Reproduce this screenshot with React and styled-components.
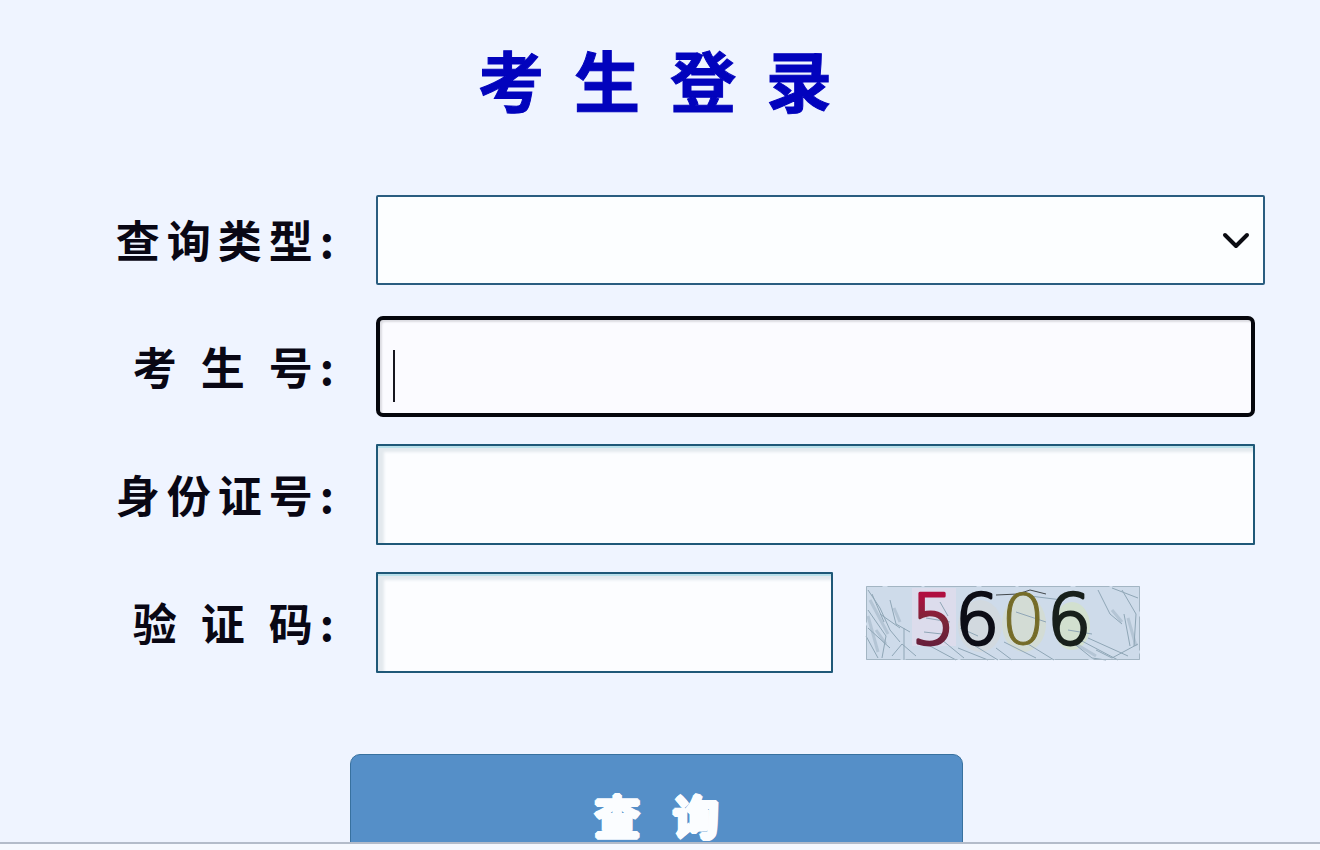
import React from "react";
import styled, { createGlobalStyle } from "styled-components";

const App = () => {
  return (
    <>
      <GlobalStyle />
      <Wrapper>
        <h1>考{"  "}生{"  "}登{"  "}录</h1>
        <form onSubmit={(e) => e.preventDefault()}>
          <SelectRow>
            <Label htmlFor="type">查询类型:</Label>
            <SelectBox>
              <select id="type" defaultValue="">
                <option value=""></option>
              </select>
              <Arrow viewBox="0 0 28 18" aria-hidden="true">
                <path d="M3 3 L14 14 L25 3" />
              </Arrow>
            </SelectBox>
          </SelectRow>

          <Row>
            <Label htmlFor="number">考 生 号:</Label>
            <InputBox>
              <Input id="number" type="text" $active />
              <Caret />
            </InputBox>
          </Row>

          <Row>
            <Label htmlFor="card">身份证号:</Label>
            <InputBox>
              <Input id="card" type="text" />
            </InputBox>
          </Row>

          <Row>
            <Label htmlFor="code">验 证 码:</Label>
            <CodeBox>
              <Input id="code" type="text" />
              <Captcha />
            </CodeBox>
          </Row>

          <Submit type="submit">查 询</Submit>
        </form>
      </Wrapper>
    </>
  );
};

const Captcha = () => (
  <CaptchaSvg viewBox="0 0 274 74" role="img" aria-label="5606">
    <defs>
      <linearGradient id="five" x1="0" y1="0" x2="0" y2="1">
        <stop offset="0.2" stopColor="#b00f40" />
        <stop offset="0.5" stopColor="#7c2638" />
        <stop offset="1" stopColor="#5a1a3c" />
      </linearGradient>
    </defs>
    <rect width="274" height="74" fill="#cedbea" />
    <rect x="46" y="2" width="44" height="58" fill="#dcdcec" />
    <ellipse cx="114" cy="40" rx="22" ry="26" fill="#d2d9df" />
    <ellipse cx="158" cy="38" rx="22" ry="28" fill="#d3dcd5" />
    <ellipse cx="206" cy="40" rx="18" ry="24" fill="#d2e0cf" />
    <g fill="none" stroke="#a3b6c6" strokeWidth="3" opacity="0.6">
      <path d="M4 14 L22 48 M10 44 L20 58 M28 22 L34 36 M2 30 L12 66 M246 24 L256 36 M262 32 L270 60 M210 58 L230 70" />
    </g>
    <g fill="none" stroke="#8fa6b6" strokeWidth="1">
      <path d="M2 4 L14 22 L24 44 L34 56 M24 14 L30 38 L44 46 M2 24 L20 50 L16 72 M0 50 L12 72 M38 42 V74" />
      <path d="M6 8 L18 36 M14 28 L34 42 M2 42 L24 62 M26 70 L36 58 L50 70" />
      <path d="M64 60 L90 74 M76 54 L98 72 M92 62 L122 74 M106 58 L132 74 M130 62 L146 74 M138 56 L170 72 M162 58 L188 74" />
      <path d="M206 56 L226 72 L240 74 M214 54 L252 74 M222 52 L262 70 M230 64 L246 72 L272 58" />
      <path d="M232 4 L244 28 L256 38 M246 2 L272 12 M256 4 L270 28 L268 60 M258 28 L264 60" />
      <path d="M60 32 L84 36 M74 16 L82 30 M164 10 L196 14 M150 26 L180 36 M94 42 L112 50 M58 46 L76 48 M202 44 L226 48" />
    </g>
    <path d="M0.500 73.500 V0.500 H273.500 V73.500 Z" fill="none" stroke="#a3b5c3" strokeDasharray="34 3 52 5" />
    <path d="M130 9 L152 8 L164 4 L180 8" fill="none" stroke="#43484c" />
    <g
      fontFamily="'DejaVu Sans', sans-serif"
      fontSize="70"
      fontWeight="200"
      strokeLinejoin="round"
    >
      <text x="45" y="58" fill="url(#five)" stroke="url(#five)" strokeWidth="3">5</text>
      <text x="89" y="58" fill="#0d0d16" stroke="#0d0d16" strokeWidth="3">6</text>
      <text x="135" y="58" fill="#756c28" stroke="#756c28" strokeWidth="1">0</text>
      <text x="181" y="58" fill="#18201b" stroke="#18201b" strokeWidth="3">6</text>
    </g>
  </CaptchaSvg>
);

const GlobalStyle = createGlobalStyle`
  * {
    box-sizing: border-box;
    margin: 0;
    padding: 0;
  }

  body {
    background-color: #f6f9ff;
    font-family: "Noto Sans CJK SC", sans-serif;
  }
`;

const Wrapper = styled.main`
  height: calc(100vh - 6px);
  overflow: hidden;
  background-color: #eff4ff;
  border-bottom: 2px solid #b4bcca;

  h1 {
    padding: 28px 10px 0 0;
    height: 195px;
    text-align: center;
    white-space: pre;
    color: #0203bd;
    font-size: 66px;
    line-height: 100px;
    font-weight: 700;
    -webkit-text-stroke: 1px #0203bd;
  }
`;

const Row = styled.div`
  display: flex;
  align-items: center;
  padding-right: 55px;
  margin-bottom: 27px;
`;

const SelectRow = styled(Row)`
  margin-bottom: 31px;
`;

const Label = styled.label`
  flex: 0 0 376px;
  padding: 0 35px 2px 0;
  text-align: right;
  color: #090714;
  font-size: 44px;
  line-height: 64px;
  letter-spacing: 7px;
  font-weight: 700;
`;

const SelectBox = styled.div`
  position: relative;
  flex: 1;

  select {
    display: block;
    width: 100%;
    height: 90px;
    appearance: none;
    background-color: #fcfeff;
    border: 2px solid #2a5d80;
    border-radius: 2px;
    font-size: 44px;
    outline: none;
  }
`;

const Arrow = styled.svg`
  position: absolute;
  right: 15px;
  top: 37px;
  width: 28px;
  height: 18px;
  pointer-events: none;
  fill: none;
  stroke: #0b0c12;
  stroke-width: 4;
  stroke-linecap: round;
  stroke-linejoin: round;
`;

const InputBox = styled.div`
  position: relative;
  flex: 1;
  margin-right: 10px;
`;

const Input = styled.input`
  display: block;
  width: 100%;
  height: 101px;
  padding: 0 16px;
  font-size: 44px;
  outline: none;
  background-color: ${({ $active }) => ($active ? "#fbfbff" : "#fcfdff")};
  border: ${({ $active }) => ($active ? "4px solid #05060c" : "2px solid #1f5878")};
  border-radius: ${({ $active }) => ($active ? "7px" : "1px")};
  box-shadow: ${({ $active }) =>
    $active ? "inset 2px 2px 2px #dcdce2" : "inset 0 2px 0 #b9e0ea, inset 6px 6px 3px #e3e9ee"};
`;

const Caret = styled.span`
  position: absolute;
  left: 17px;
  top: 34px;
  width: 2px;
  height: 52px;
  background-color: #16161f;
`;

const CodeBox = styled.div`
  flex: 1;
  display: flex;
  align-items: center;
  gap: 33px;

  input {
    flex: 0 1 457px;
    min-width: 0;
  }
`;

const CaptchaSvg = styled.svg`
  flex: 0 0 274px;
  height: 74px;
  overflow: visible;
`;

const Submit = styled.button`
  display: block;
  width: calc(100% - 707px);
  height: 120px;
  padding-left: 11px;
  margin: 81px 0 0 350px;
  background-color: #558fc8;
  border: 1px solid #38719f;
  border-radius: 10px;
  color: #fbfdff;
  font-family: inherit;
  font-size: 46px;
  font-weight: 700;
  letter-spacing: 11px;
  text-shadow: 1px 1px 0 #fbfdff, -1px 1px 0 #fbfdff, 1px -1px 0 #fbfdff, -1px -1px 0 #fbfdff,
    2px 0 0 #fbfdff, -2px 0 0 #fbfdff, 0 2px 0 #fbfdff, 0 -2px 0 #fbfdff;
  cursor: pointer;
`;

export default App;
